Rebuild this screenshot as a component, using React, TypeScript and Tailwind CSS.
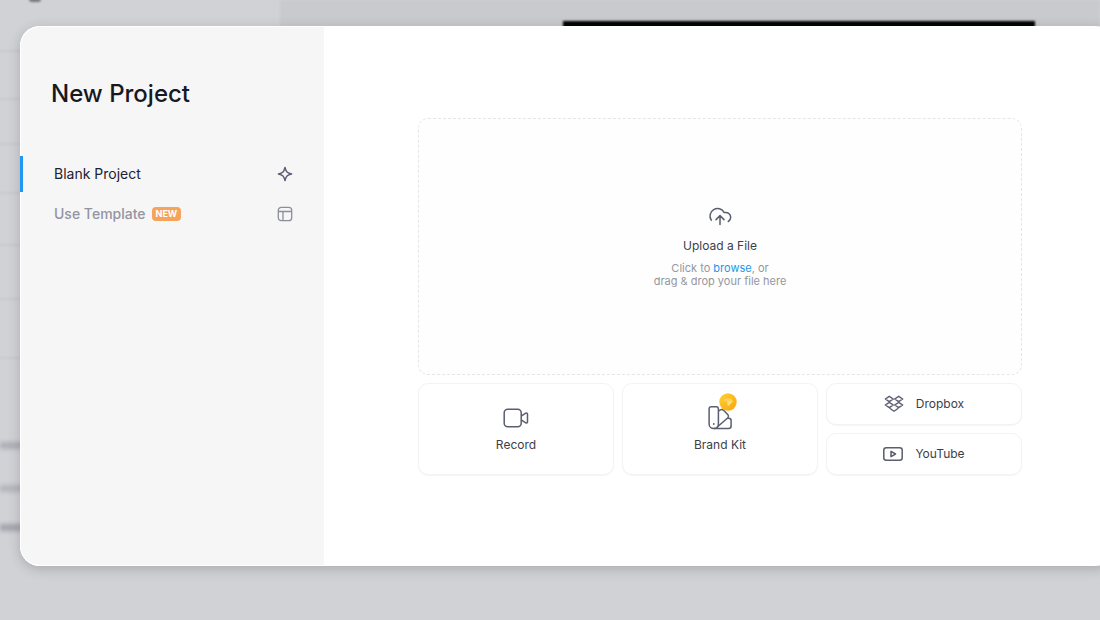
import React, { useState } from 'react';

type Section = 'blank' | 'template';

const SparkIcon = () => (
  <svg width="16" height="16" viewBox="0 0 16 16" fill="none" stroke="currentColor" strokeWidth="1.500" strokeLinejoin="round">
    <path d="M8 1.400C8.700 4.300 9.300 5.400 10 6s1.700 1.300 4.600 2c-2.900.7-3.900 1.300-4.600 2s-1.300 1.700-2 4.600C7.300 11.700 6.700 10.700 6 10S4.300 8.700 1.400 8C4.300 7.300 5.300 6.700 6 6s1.300-1.700 2-4.600z" />
  </svg>
);

const LayoutIcon = () => (
  <svg width="16" height="16" viewBox="0 0 16 16" fill="none" stroke="currentColor" strokeWidth="1.300">
    <rect x="1.300" y="1.300" width="13.400" height="13.400" rx="3" />
    <path d="M1.300 5.500h13.400M6 5.500v9.200" />
  </svg>
);

const UploadIcon = () => (
  <svg width="26" height="24" viewBox="0 0 26 24" fill="none" stroke="currentColor" strokeWidth="1.500" strokeLinecap="round" strokeLinejoin="round">
    <path d="M4.300 16.200A7.500 7.500 0 1 1 17.200 8.600c3.300-.9 6.500 1.300 6.500 4.600 0 1.800-.9 3.400-2.400 4.300" />
    <path d="M13 20.600v-8.400M9 15.600l4-4 4 4" />
  </svg>
);

const RecordIcon = () => (
  <svg width="26" height="20" viewBox="0 0 26 20" fill="none" stroke="currentColor" strokeWidth="1.500" strokeLinejoin="round">
    <rect x="1.200" y="1.300" width="17" height="17.400" rx="3.500" />
    <path d="M18.200 8.200l4.600-3c.8-.5 1.700 0 1.700.9v7.800c0 .9-.9 1.400-1.700.9l-4.600-3" />
  </svg>
);

const BrandIcon = () => (
  <svg width="26" height="26" viewBox="0 0 26 26" fill="none" stroke="currentColor" strokeWidth="1.500" strokeLinejoin="round">
    <path d="M4.300 1.800h4.900c1.300 0 2.200.9 2.200 2.200v14.900c0 2.700-1.900 4.600-4.600 4.600s-4.700-1.900-4.700-4.600V4c0-1.300.9-2.200 2.200-2.200z" />
    <path d="M11.400 6.100l2-1.200c1-.6 2.300-.5 3.200.4l4.300 4.400c.8.9.8 2.200 0 3.100L10 22.300" />
    <path d="M6.800 23.500h14.800c1.500 0 2.500-1 2.500-2.500v-5.200c0-1.500-1-2.500-2.500-2.500h-1.400" />
    <circle cx="6.800" cy="19" r="0.900" fill="currentColor" stroke="none" />
  </svg>
);

const DropboxIcon = () => (
  <svg width="20" height="18" viewBox="0 0 20 18" fill="none" stroke="currentColor" strokeWidth="1.400" strokeLinejoin="round">
    <path d="M5.300 1.300l4 2.700-4 2.700L1.300 4zM14.700 1.300l4 2.700-4 2.700-4-2.700zM5.300 7.300l4 2.700-4 2.700-4-2.700zM14.700 7.300l4 2.700-4 2.700-4-2.700z" />
    <path d="M5.700 13.300l4.300 3 4.300-3" />
  </svg>
);

const YoutubeIcon = () => (
  <svg width="20" height="14" viewBox="0 0 20 14" fill="none" stroke="currentColor" strokeWidth="1.500" strokeLinejoin="round">
    <rect x="0.800" y="0.800" width="18.400" height="12.400" rx="2.500" />
    <path d="M8 4.300v5.400L12.500 7z" />
  </svg>
);

const PremiumBadge = () => (
  <svg width="18" height="18" viewBox="0 0 18 18" className="absolute -top-3 left-3">
    <defs>
      <linearGradient id="coin" x1="0" y1="0" x2="1" y2="1">
        <stop offset="0" stopColor="#ffd034" />
        <stop offset="1" stopColor="#f9a70d" />
      </linearGradient>
    </defs>
    <circle cx="9" cy="9" r="8.700" fill="url(#coin)" />
    <path d="M6 5.500h6l2 2.700L9 13.300 4 8.200z" fill="#ffc01f" />
    <path d="M6 5.500h6l2 2.700H4z" fill="#ffd35a" />
    <path d="M8 8.200h6L9 13.300z" fill="#ffe08a" />
  </svg>
);

// Out-of-focus editor that sits behind the dialog
const Backdrop = () => (
  <div aria-hidden="true" className="absolute inset-0 overflow-hidden">
    <div className="absolute top-0 right-0 left-[280px] h-24 bg-[#c9cacd] blur-[1px]" />
    <div className="absolute -top-1 left-[29px] h-[6px] w-3 rounded-full bg-[#77777c] blur-[1px]" />
    <div className="absolute top-[21px] right-[65px] left-[563px] h-10 bg-black blur-[1px]" />
    {[50, 98, 143, 192, 244, 298, 357].map(top => (
      <div key={top} style={{ top }} className="absolute left-0 h-[2px] w-8 bg-[#c9c9ce] blur-[1px]" />
    ))}
    <div className="absolute top-[442px] left-0 h-[7px] w-8 bg-[#aeaeb6] blur-[2px]" />
    <div className="absolute top-[485px] left-0 h-[7px] w-8 bg-[#b4b4bc] blur-[2px]" />
    <div className="absolute top-[524px] left-0 h-[7px] w-8 bg-[#a3a3ad] blur-[2px]" />
  </div>
);

const App: React.FC = () => {
  const [section, setSection] = useState<Section>('blank');

  const items = [
    { id: 'blank' as const, label: 'Blank Project', icon: <SparkIcon /> },
    { id: 'template' as const, label: 'Use Template', icon: <LayoutIcon />, isNew: true },
  ];

  const cardClass = 'flex items-center justify-center rounded-[10px] border border-[#f3f3f4] bg-white shadow-[0_1px_1px_rgba(0,0,0,0.04)]';

  return (
    <div className="relative flex min-h-screen overflow-hidden bg-[#d1d2d6] pt-[26px] pb-[54px] font-['Inter',sans-serif]">
      <Backdrop />

      <div
        role="dialog"
        aria-labelledby="dialog-title"
        className="relative -mr-4 ml-5 flex flex-1 rounded-[20px] bg-white shadow-[0_3px_12px_rgba(50,60,60,0.25)]"
      >
        {/* Sidebar */}
        <aside className="w-[304px] shrink-0 rounded-l-[20px] border border-r-0 border-white bg-[#f6f6f7] pt-[51px]">
          <h1 id="dialog-title" className="px-[30px] text-2xl font-medium text-[#17191f]">New Project</h1>
          <nav className="mt-[46px] flex flex-col gap-1">
            {items.map(item => (
              <button
                key={item.id}
                onClick={() => setSection(item.id)}
                className={`-ml-px flex h-9 items-center border-l-[3px] pr-[31px] pl-[31px] text-sm ${
                  section === item.id ? 'border-[#2196f3] text-[#1d2130]' : 'border-transparent font-medium text-[#9294a0]'
                }`}
              >
                {item.label}
                {item.isNew && (
                  <span className="ml-1.5 rounded-[4px] bg-[#f5a55b] px-1 text-[9px] leading-[14px] font-bold text-white">NEW</span>
                )}
                <span className={`ml-auto ${section === item.id ? 'text-[#5b5d70]' : 'text-[#8d8f98]'}`}>{item.icon}</span>
              </button>
            ))}
          </nav>
        </aside>

        {/* Sources */}
        <main className="flex flex-1 flex-col justify-center px-[94px] text-xs text-[#3c3e49]">
          <label className="flex h-[257px] cursor-pointer flex-col items-center justify-center rounded-[10px] border border-dashed border-[#e6e6e8] bg-[#fefefe]">
            <input type="file" className="sr-only" />
            <span className="text-[#5b5d70]"><UploadIcon /></span>
            <span className="mt-2.5">Upload a File</span>
            <span className="mt-2 text-center text-[11px] leading-[13px] text-[#9496a0]">
              Click to <span className="text-[#1c96e8]">browse</span>, or
              <br />
              drag &amp; drop your file here
            </span>
          </label>

          <div className="mt-2 grid grid-cols-3 gap-2">
            <button className={`${cardClass} flex-col gap-1.5`}>
              <span className="flex h-[26px] items-center text-[#5b5d70]"><RecordIcon /></span>
              Record
            </button>
            <button className={`${cardClass} flex-col gap-1.5`}>
              <span className="relative text-[#5b5d70]">
                <BrandIcon />
                <PremiumBadge />
              </span>
              Brand Kit
            </button>
            <div className="flex flex-col gap-2">
              <button className={`${cardClass} h-[42px] gap-3`}>
                <span className="text-[#5b5d70]"><DropboxIcon /></span>
                Dropbox
              </button>
              <button className={`${cardClass} h-[42px] gap-3`}>
                <span className="text-[#5b5d70]"><YoutubeIcon /></span>
                YouTube
              </button>
            </div>
          </div>
        </main>
      </div>
    </div>
  );
};

export default App;
